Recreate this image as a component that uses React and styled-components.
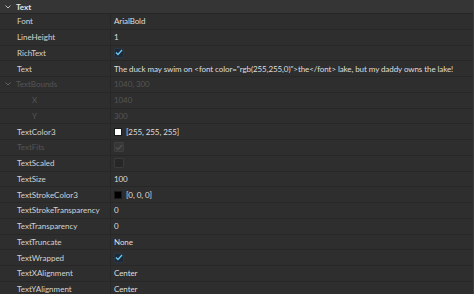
import React from "react";
import styled, { createGlobalStyle } from "styled-components";

const GlobalStyle = createGlobalStyle`
  html, body {
    margin: 0;
    padding: 0;
    background: #2e2e2e;
    overflow: hidden;
  }
  body {
    font-family: "Lato", "Noto Sans", sans-serif;
  }
`;

const Panel = styled.div`
  width: 474px;
  height: 294px;
  background: #2e2e2e;
  border-right: 1px solid #3c3c3c;
  box-sizing: border-box;
  overflow: hidden;
`;

const Header = styled.div`
  height: 14px;
  display: flex;
  align-items: center;
  gap: 5px;
  padding-left: 5px;
  background: #353535;
  border-bottom: 1px solid #262626;
  color: #e4e4e4;
  font-size: 8px;
  font-weight: 700;
  box-sizing: border-box;
`;

const Row = styled.div`
  height: 15.75px;
  display: grid;
  grid-template-columns: 111px 1fr;
  border-bottom: 1px solid #272727;
  box-sizing: border-box;
  font-size: 8px;
`;

const NameCell = styled.div`
  display: flex;
  align-items: center;
  gap: 5px;
  padding-left: ${(p) => p.$indent}px;
  border-right: 1px solid #272727;
  color: ${(p) => (p.$disabled ? "#555555" : "#d2d2d2")};
  white-space: nowrap;
  overflow: hidden;
`;

const ValueCell = styled.div`
  display: flex;
  align-items: center;
  gap: 4px;
  padding-left: 3px;
  letter-spacing: -0.08px;
  color: ${(p) => (p.$disabled ? "#555555" : "#dedede")};
  white-space: nowrap;
  overflow: hidden;
`;

const Swatch = styled.span`
  width: 8px;
  height: 8px;
  background: ${(p) => p.$color};
  border: 1px solid #1a1a1a;
  box-sizing: border-box;
`;

const Box = styled.span`
  width: 10px;
  height: 10px;
  display: flex;
  align-items: center;
  justify-content: center;
  border-radius: 1px;
  background: ${(p) =>
    p.$disabled ? "#363636" : p.$checked ? "#1c2a38" : "#262626"};
  border: 1px solid ${(p) => (p.$disabled ? "#3e3e3e" : p.$checked ? "#2c3642" : "#3a3a3a")};
  box-sizing: border-box;
`;

const Chevron = ({ color }) => (
  <svg width="6" height="4" viewBox="0 0 6 4">
    <path d="M0.5 0.5 L3 3 L5.5 0.5" fill="none" stroke={color} strokeWidth="1" />
  </svg>
);

const Check = ({ color }) => (
  <svg width="8" height="7" viewBox="0 0 8 7">
    <path d="M1 3.4 L3 5.5 L7 1" fill="none" stroke={color} strokeWidth="1.4" />
  </svg>
);

const rows = [
  { name: "Font", value: "ArialBold" },
  { name: "LineHeight", value: "1" },
  { name: "RichText", check: true },
  {
    name: "Text",
    value:
      'The duck may swim on <font color="rgb(255,255,0)">the</font> lake, but my daddy owns the lake!',
  },
  { name: "TextBounds", value: "1040, 300", disabled: true, group: true },
  { name: "X", value: "1040", disabled: true, child: true },
  { name: "Y", value: "300", disabled: true, child: true },
  { name: "TextColor3", value: "[255, 255, 255]", swatch: "#ffffff" },
  { name: "TextFits", check: true, disabled: true },
  { name: "TextScaled", check: false },
  { name: "TextSize", value: "100" },
  { name: "TextStrokeColor3", value: "[0, 0, 0]", swatch: "#000000" },
  { name: "TextStrokeTransparency", value: "0" },
  { name: "TextTransparency", value: "0" },
  { name: "TextTruncate", value: "None" },
  { name: "TextWrapped", check: true },
  { name: "TextXAlignment", value: "Center" },
  { name: "TextYAlignment", value: "Center" },
];

const App = () => (
  <>
    <GlobalStyle />
    <Panel>
      <Header>
        <Chevron color="#bdbdbd" />
        Text
      </Header>
      {rows.map((r) => (
        <Row key={r.name}>
          <NameCell
            $disabled={r.disabled}
            $indent={r.group ? 5 : r.child ? 32 : 17}
          >
            {r.group && <Chevron color="#666666" />}
            {r.name}
          </NameCell>
          <ValueCell $disabled={r.disabled}>
            {r.swatch && <Swatch $color={r.swatch} />}
            {r.check !== undefined ? (
              <Box $checked={r.check} $disabled={r.disabled}>
                {r.check && <Check color={r.disabled ? "#4e4e4e" : "#6cc4ee"} />}
              </Box>
            ) : (
              r.value
            )}
          </ValueCell>
        </Row>
      ))}
    </Panel>
  </>
);

export default App;
